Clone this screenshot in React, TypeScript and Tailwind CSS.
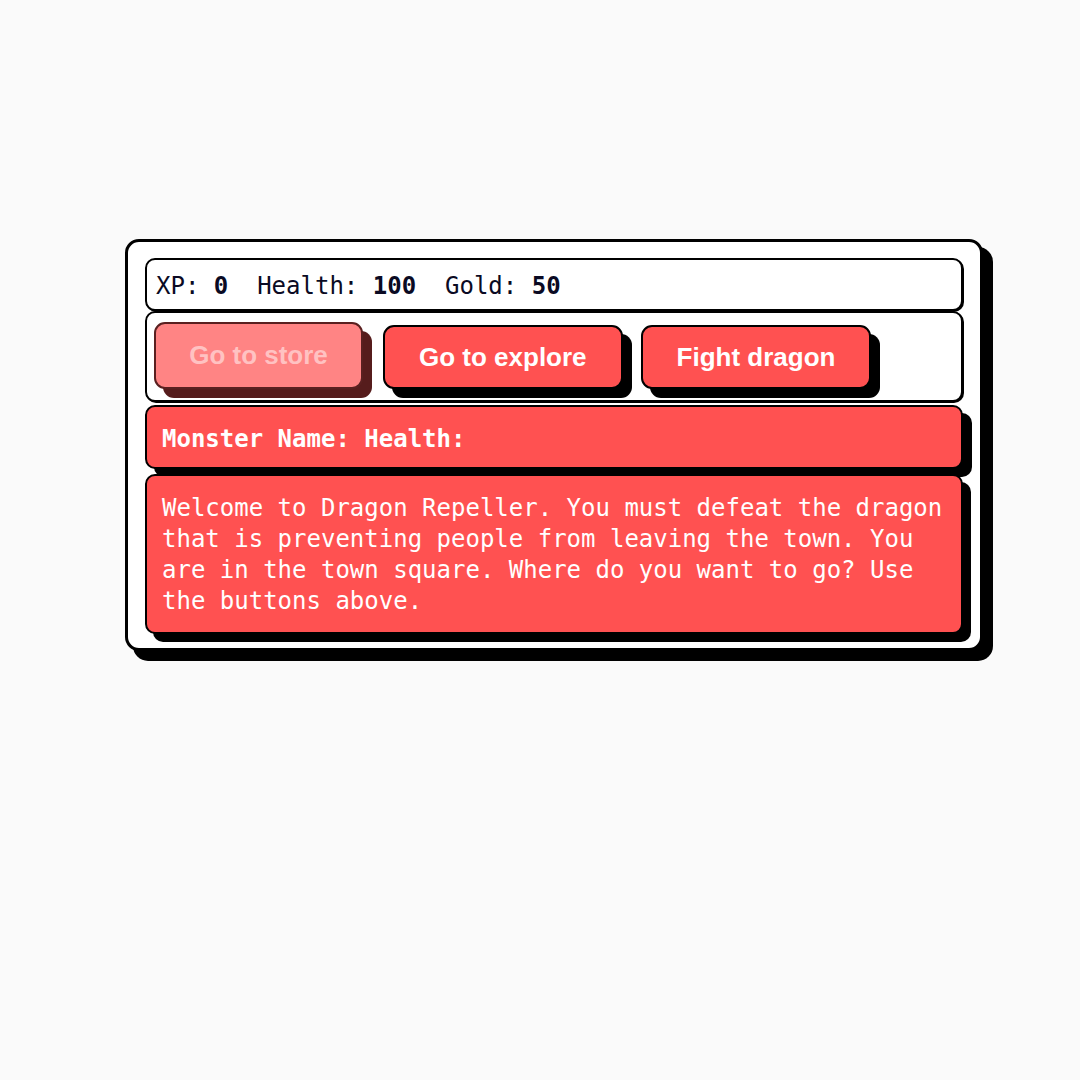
const mono = "font-['DejaVu_Sans_Mono',monospace]";

const buttons = [
  { label: "Go to store", disabled: true },
  { label: "Go to explore", disabled: false },
  { label: "Fight dragon", disabled: false },
];

export default function App() {
  return (
    <div className="min-h-[1080px] w-full bg-[#fafafa] pt-[239px] pl-[125px]">
      <div className="w-[858px] rounded-[14px] border-[3px] border-black bg-white px-[17px] pt-[16px] pb-[14px] shadow-[9px_9px_0_1px_#000]">
        {/* stats */}
        <div
          className={`${mono} flex h-[53px] items-center rounded-[10px] border-2 border-black bg-white pt-[3px] pl-[9px] text-[24px] text-[#0a0a23] shadow-[1px_1px_0_0_#000]`}
        >
          <span className="whitespace-pre">
            XP: <strong>0</strong>{"  "}Health: <strong>100</strong>{"  "}Gold: <strong>50</strong>
          </span>
        </div>

        {/* controls */}
        <div className="flex h-[91px] items-end gap-[18px] rounded-[10px] border-2 border-black bg-white pt-[9px] pb-[11px] pl-[7px] shadow-[1px_1px_0_0_#000]">
          {buttons.map((b) =>
            b.disabled ? (
              <button
                key={b.label}
                disabled
                className="mr-[2px] h-[67px] w-[209px] rounded-[11px] border-2 border-[#5a2020] bg-[#ff8484] font-['Liberation_Sans',Arial,sans-serif] text-[26px] font-bold text-[#ffc2c2] shadow-[9px_9px_0_0_#561c1c]"
              >
                {b.label}
              </button>
            ) : (
              <button
                key={b.label}
                className="h-[64px] rounded-[11px] border-2 border-black bg-[#ff5151] px-[34px] font-['Liberation_Sans',Arial,sans-serif] text-[26px] font-bold text-white shadow-[9px_9px_0_0_#000]"
              >
                {b.label}
              </button>
            )
          )}
        </div>

        {/* monster stats */}
        <div
          className={`${mono} mt-[3px] flex h-[64px] items-center rounded-[10px] border-2 border-black bg-[#ff5151] pt-[3px] pl-[15px] text-[24px] font-bold text-white shadow-[9px_8px_0_0_#000]`}
        >
          Monster Name: Health:
        </div>

        {/* text */}
        <div
          className={`${mono} mt-[5px] rounded-[10px] border-2 border-black bg-[#ff5151] px-[15px] pt-[17px] pb-[15px] text-[24px] leading-[31px] text-white shadow-[8px_8px_0_0_#000]`}
        >
          Welcome to Dragon Repeller. You must defeat the dragon that is preventing people from leaving the town. You are in the town square. Where do you want to go? Use the buttons above.
        </div>
      </div>
    </div>
  );
}
